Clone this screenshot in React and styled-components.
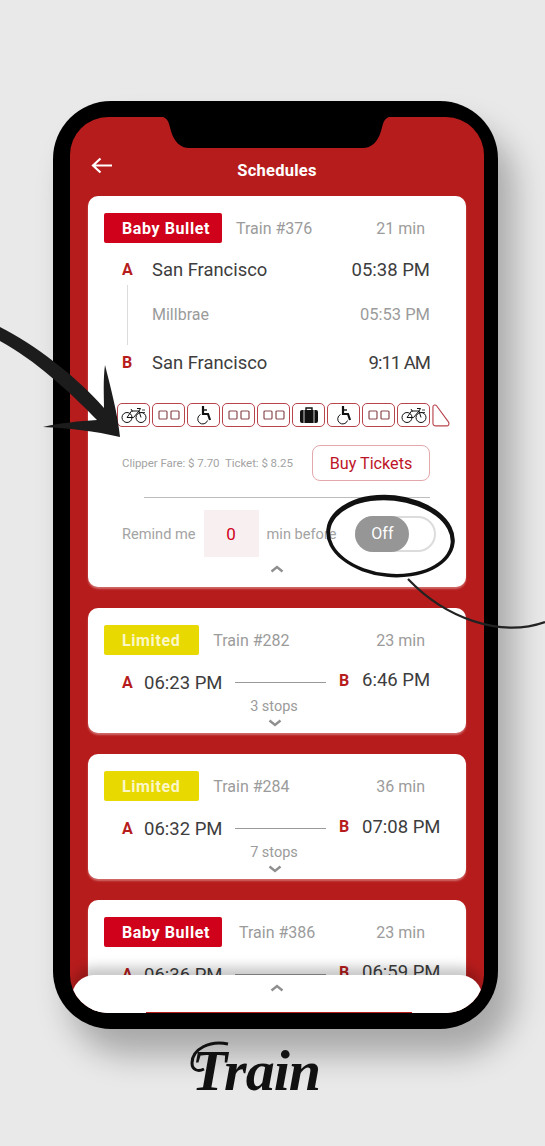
import styled, { createGlobalStyle } from "styled-components";

const RED = "#b71c1c";
const BRAND = "#d0021b";
const FONT = `"Roboto", "Liberation Sans", sans-serif`;

const GlobalStyle = createGlobalStyle`
  html, body {
    margin: 0;
    background: #e9e9e9;
  }
  * {
    box-sizing: border-box;
  }
`;

/* ---------- small drawings ---------- */

const BikeIcon = () => (
  <svg width="26" height="18" viewBox="0 0 26 18" fill="none" stroke="#111" strokeWidth="1">
    <circle cx="6" cy="11.5" r="5" />
    <circle cx="20" cy="11.5" r="5" />
    <path d="M6 11.5 10.5 5H18L12.5 11.5H6M18 5 20 11.5M10 3 11.5 5.5M16 2.5H19.5L18 5" />
    <path d="M21 4h3M20 6.5h4" strokeWidth=".8" />
  </svg>
);

const SeatsIcon = () => (
  <svg width="22" height="10" viewBox="0 0 22 10" fill="none" stroke="#8a4a4e" strokeWidth="1.2">
    <rect x="1" y="1" width="8" height="8" rx="1" />
    <rect x="13" y="1" width="8" height="8" rx="1" />
  </svg>
);

const WheelchairIcon = () => (
  <svg width="18" height="20" viewBox="0 0 18 20" fill="none" stroke="#111">
    <path d="M8 1v8h5l2 6" strokeWidth="2.2" />
    <path d="M8 5h4" strokeWidth="1.4" />
    <path d="M5.5 9.5a5 5 0 1 0 7 6" strokeWidth="1" />
  </svg>
);

const SuitcaseIcon = () => (
  <svg width="18" height="16" viewBox="0 0 18 16">
    <path d="M6 3V1h6v2" fill="none" stroke="#111" strokeWidth="1.4" />
    <rect x="0" y="3" width="18" height="13" rx="2" fill="#111" />
    <path d="M4 3v13M14 3v13" stroke="#fff" strokeWidth=".8" />
  </svg>
);

const CabIcon = () => (
  <svg width="19" height="24" viewBox="0 0 19 24" fill="none" stroke="#b8444c" strokeWidth="1.2">
    <path d="M1 3.5C1 1.5 3.5.5 5 2.5l12.5 17c1 1.8 0 4-2 4H4c-2 0-3-1-3-3z" />
  </svg>
);

const ChevronIcon = ({ $down }) => (
  <svg width="14" height="8" viewBox="0 0 14 8" fill="none" stroke="#8f8f8f" strokeWidth="2.4">
    <path d={$down ? "M1.5 1.5 7 6l5.5-4.5" : "M1.5 6.5 7 2l5.5 4.5"} />
  </svg>
);

const BackArrow = () => (
  <svg width="22" height="18" viewBox="0 0 22 18" fill="none" stroke="#fff" strokeWidth="2.2">
    <path d="M21 8.5H2M9.5 1.5 2 8.5l7.5 7" />
  </svg>
);

/* annotation marks drawn over the mockup */
const Annotations = () => (
  <Marks width="545" height="1146" viewBox="0 0 545 1146">
    <path
      d="M0 327C35 345 75 375 104 408C104 395 103 380 105 365C110 385 118 415 120 437C95 431 68 428 43 427C60 423 80 421 97 420C70 392 35 360 0 341Z"
      fill="#1c1c1c"
    />
    <path
      d="M326 536a64.5 41 0 1 0 129 0a64.5 41 0 1 0-129 0ZM330 537a60.5 36.5 0 1 0 121 0a60.5 36.5 0 1 0-121 0Z"
      fill="#111"
      fillRule="evenodd"
      transform="rotate(6 390 536)"
    />
    <path d="M408 579C445 618 500 638 545 622" fill="none" stroke="#222" strokeWidth="2.2" />
  </Marks>
);

/* ---------- data ---------- */

const AMENITIES = ["bike", "seats", "chair", "seats", "seats", "bag", "chair", "seats", "bike"];

const AMENITY_ICONS = {
  bike: <BikeIcon />,
  seats: <SeatsIcon />,
  chair: <WheelchairIcon />,
  bag: <SuitcaseIcon />,
};

const TRAINS = [
  { tone: "yellow", label: "Limited", train: "Train #282", mins: "23 min", from: "06:23 PM", to: "6:46 PM", stops: "3 stops", raise: 5 },
  { tone: "yellow", label: "Limited", train: "Train #284", mins: "36 min", from: "06:32 PM", to: "07:08 PM", stops: "7 stops", raise: 4 },
  { tone: "red", label: "Baby Bullet", train: "Train #386", mins: "23 min", from: "06:36 PM", to: "06:59 PM", stops: "5 stops", raise: 5, gap: 17 },
];

const TrainHeader = ({ tone, label, train, mins, gap }) => (
  <HeadRow>
    <Badge $tone={tone}>{label}</Badge>
    <TrainNo $gap={gap}>{train}</TrainNo>
    <Mins>{mins}</Mins>
  </HeadRow>
);

function App() {
  return (
    <Page>
      <GlobalStyle />
      <Phone>
        <Screen>
          <Notch viewBox="0 0 226 31">
            <path d="M0 0H226C220 2 220 8 218 14C215 25 208 31 200 31H26C18 31 11 25 8 14C6 8 6 2 0 0Z" />
          </Notch>
          <Header>
            <BackButton>
              <BackArrow />
            </BackButton>
            <Title>Schedules</Title>
          </Header>

          <CardList>
            <OpenCard>
              <TrainHeader tone="red" label="Baby Bullet" train="Train #376" mins="21 min" />

              <Route>
                <RouteLine />
                <StopRow>
                  <Letter>A</Letter>
                  <City>San Francisco</City>
                  <Time>05:38 PM</Time>
                </StopRow>
                <StopRow>
                  <Letter />
                  <City $muted>Millbrae</City>
                  <Time $muted>05:53 PM</Time>
                </StopRow>
                <StopRow $top={3}>
                  <Letter>B</Letter>
                  <City>San Francisco</City>
                  <Time $tight>9:11 AM</Time>
                </StopRow>
              </Route>

              <Carriages>
                {AMENITIES.map((kind, i) => (
                  <Carriage key={i}>{AMENITY_ICONS[kind]}</Carriage>
                ))}
                <CabIcon />
              </Carriages>

              <FareRow>
                <Fare>Clipper Fare: $ 7.70&nbsp; Ticket: $ 8.25</Fare>
                <BuyButton>Buy Tickets</BuyButton>
              </FareRow>

              <Divider />

              <RemindRow>
                <RemindText>Remind me</RemindText>
                <MinutesBox>0</MinutesBox>
                <RemindText>min before</RemindText>
                <Toggle>
                  <Knob>Off</Knob>
                </Toggle>
              </RemindRow>

              <ChevronRow $top={8}>
                <ChevronIcon />
              </ChevronRow>
            </OpenCard>

            {TRAINS.map((t) => (
              <ClosedCard key={t.train}>
                <TrainHeader tone={t.tone} label={t.label} train={t.train} mins={t.mins} gap={t.gap} />
                <CompactRoute>
                  <Letter>A</Letter>
                  <CompactTime>{t.from}</CompactTime>
                  <CompactLine />
                  <Letter $raise={t.raise}>B</Letter>
                  <CompactTime $raise={t.raise}>{t.to}</CompactTime>
                </CompactRoute>
                <Stops>{t.stops}</Stops>
                <ChevronRow $top={4} $shift={5}>
                  <ChevronIcon $down />
                </ChevronRow>
              </ClosedCard>
            ))}
          </CardList>

          <BottomSheet>
            <ChevronIcon />
            <SheetButton />
          </BottomSheet>
        </Screen>
      </Phone>

      <Logo>
        <Swash width="40" height="44" viewBox="0 0 40 44" fill="none" stroke="#111" strokeWidth="3">
          <path d="M38 3C20-1 2 8 2 22c0 7 6 9 12 6" />
        </Swash>
        Train
      </Logo>

      <Annotations />
    </Page>
  );
}

export default App;

const Page = styled.div`
  position: relative;
  width: 545px;
  height: 1146px;
  overflow: hidden;
  padding: 101px 0 0 53px;
  background: #e9e9e9;
  font-family: ${FONT};
`;

const Marks = styled.svg`
  position: absolute;
  inset: 0;
  pointer-events: none;
`;

const Phone = styled.div`
  width: 445px;
  height: 928px;
  padding: 16px 14px 16px 17px;
  border-radius: 58px;
  background: #000;
  box-shadow: 16px 26px 32px rgba(0, 0, 0, 0.28);
`;

const Screen = styled.div`
  position: relative;
  display: flex;
  flex-direction: column;
  height: 100%;
  overflow: hidden;
  border-radius: 38px;
  background: ${RED};
`;

const Notch = styled.svg`
  position: absolute;
  top: 0;
  left: 93px;
  width: 226px;
  height: 31px;
  fill: #000;
`;

const Header = styled.header`
  position: relative;
  display: flex;
  flex: none;
  align-items: center;
  justify-content: center;
  height: 79px;
  padding-top: 27px;
`;

const BackButton = styled.div`
  position: absolute;
  top: 40px;
  left: 21px;
  line-height: 0;
`;

const Title = styled.h1`
  margin: 0;
  color: #fff;
  font-size: 16.5px;
  font-weight: 700;
  letter-spacing: 0.25px;
`;

const CardList = styled.main`
  display: flex;
  flex-direction: column;
  gap: 21px;
  padding: 0 18px;
`;

const Card = styled.section`
  flex: none;
  width: 378px;
  padding: 17px 16px 0;
  border-radius: 10px;
  background: #fff;
  box-shadow: 0 2px 2px rgba(255, 255, 255, 0.35);
`;

const OpenCard = styled(Card)`
  height: 391px;
`;

const ClosedCard = styled(Card)`
  height: 125px;
`;

const HeadRow = styled.div`
  display: flex;
  align-items: center;
  height: 30px;
  padding-right: 25px;
`;

const Badge = styled.span`
  display: flex;
  align-items: center;
  height: 30px;
  padding: 0 ${({ $tone }) => ($tone === "yellow" ? 19 : 12)}px 0 18px;
  border-radius: 2px;
  background: ${({ $tone }) => ($tone === "yellow" ? "#e8d900" : BRAND)};
  color: ${({ $tone }) => ($tone === "yellow" ? "#fbf7c8" : "#fff")};
  font-size: 16px;
  font-weight: 700;
  letter-spacing: 0.6px;
`;

const TrainNo = styled.span`
  margin-left: ${({ $gap }) => $gap || 14}px;
  color: #9b9b9b;
  font-size: 16px;
`;

const Mins = styled.span`
  margin-left: auto;
  color: #9b9b9b;
  font-size: 16px;
`;

const Route = styled.div`
  position: relative;
  display: flex;
  flex-direction: column;
  gap: 20px;
  margin-top: 14px;
  padding: 0 20px 0 18px;
`;

const RouteLine = styled.div`
  position: absolute;
  top: 28px;
  left: 23px;
  width: 1px;
  height: 60px;
  background: #dcdcdc;
`;

const StopRow = styled.div`
  display: flex;
  align-items: center;
  height: 25px;
  margin-top: ${({ $top }) => $top || 0}px;
`;

const Letter = styled.span`
  width: 30px;
  margin-bottom: ${({ $raise }) => $raise || 0}px;
  color: ${RED};
  font-size: 16px;
  font-weight: 700;
`;

const City = styled.span`
  color: ${({ $muted }) => ($muted ? "#9b9b9b" : "#3d3d3d")};
  font-size: ${({ $muted }) => ($muted ? 16 : 18.4)}px;
`;

const Time = styled.span`
  margin-left: auto;
  color: ${({ $muted }) => ($muted ? "#9b9b9b" : "#3d3d3d")};
  font-size: ${({ $muted }) => ($muted ? 16.5 : 18.5)}px;
  letter-spacing: ${({ $tight }) => ($tight ? -1 : 0)}px;
`;

const Carriages = styled.div`
  display: flex;
  gap: 2px;
  align-items: center;
  margin: 28px 0 0 13px;
`;

const Carriage = styled.div`
  display: flex;
  flex: none;
  align-items: center;
  justify-content: center;
  width: 33px;
  height: 24px;
  border: 1px solid #b8444c;
  border-radius: 5px;
`;

const FareRow = styled.div`
  display: flex;
  align-items: center;
  justify-content: space-between;
  margin-top: 18px;
  padding: 0 20px 0 18px;
`;

const Fare = styled.span`
  color: #a3a3a3;
  font-size: 11.5px;
  letter-spacing: -0.05px;
`;

const BuyButton = styled.button`
  width: 118px;
  height: 36px;
  padding: 0;
  border: 1px solid #e3a8ab;
  border-radius: 8px;
  background: #fff;
  color: #bd1428;
  font-family: ${FONT};
  font-size: 16.2px;
`;

const Divider = styled.hr`
  width: 286px;
  height: 1px;
  margin: 16px 0 0 40px;
  border: 0;
  background: #bdbdbd;
`;

const RemindRow = styled.div`
  display: flex;
  align-items: center;
  height: 47px;
  margin-top: 12px;
  padding-left: 18px;
`;

const RemindText = styled.span`
  color: #a3a3a3;
  font-size: 14.6px;
`;

const MinutesBox = styled.div`
  display: flex;
  align-items: center;
  justify-content: center;
  width: 55px;
  height: 47px;
  margin: 0 8px;
  background: #f8eff0;
  color: ${BRAND};
  font-size: 17px;
`;

const Toggle = styled.div`
  width: 81px;
  height: 36px;
  margin-left: 19px;
  border: 2px solid #dcdcdc;
  border-radius: 18px;
  background: #fff;
`;

const Knob = styled.div`
  display: flex;
  align-items: center;
  justify-content: center;
  width: 54px;
  height: 36px;
  margin: -2px 0 0 -2px;
  border-radius: 18px;
  background: #969696;
  color: #fff;
  font-size: 16px;
`;

const ChevronRow = styled.div`
  display: flex;
  justify-content: center;
  margin-top: ${({ $top }) => $top || 0}px;
  padding-right: ${({ $shift }) => $shift || 0}px;
  line-height: 0;
`;

const CompactRoute = styled.div`
  display: grid;
  grid-template-columns: 22px 91px 91px 13px 23px auto;
  align-items: center;
  height: 27px;
  margin-top: 14px;
  padding-left: 18px;
  & > :nth-child(4) {
    grid-column: 5;
  }
`;

const CompactTime = styled.span`
  margin-bottom: ${({ $raise }) => $raise || 0}px;
  color: #3d3d3d;
  font-size: 18.5px;
  white-space: nowrap;
`;

const CompactLine = styled.div`
  height: 1px;
  background: #9a9a9a;
`;

const Stops = styled.div`
  margin-top: 3px;
  padding-right: 6px;
  color: #9b9b9b;
  font-size: 14.5px;
  line-height: 16px;
  text-align: center;
`;

const BottomSheet = styled.footer`
  position: absolute;
  right: 2px;
  bottom: 0;
  left: 2px;
  display: flex;
  justify-content: center;
  height: 38px;
  padding-top: 9px;
  border-radius: 22px 22px 0 0;
  background: #fff;
  box-shadow: 0 -8px 12px rgba(0, 0, 0, 0.22);
`;

const SheetButton = styled.div`
  position: absolute;
  bottom: 0;
  left: 74px;
  width: 266px;
  height: 1px;
  background: ${RED};
`;

const Logo = styled.div`
  position: relative;
  width: 130px;
  margin: 6px 0 0 137px;
  color: #111;
  font-family: "Liberation Serif", serif;
  font-size: 58px;
  font-style: italic;
  font-weight: 700;
  line-height: 72px;
  text-align: right;
  letter-spacing: -1px;
`;

const Swash = styled.svg`
  position: absolute;
  top: 6px;
  left: 0;
`;
